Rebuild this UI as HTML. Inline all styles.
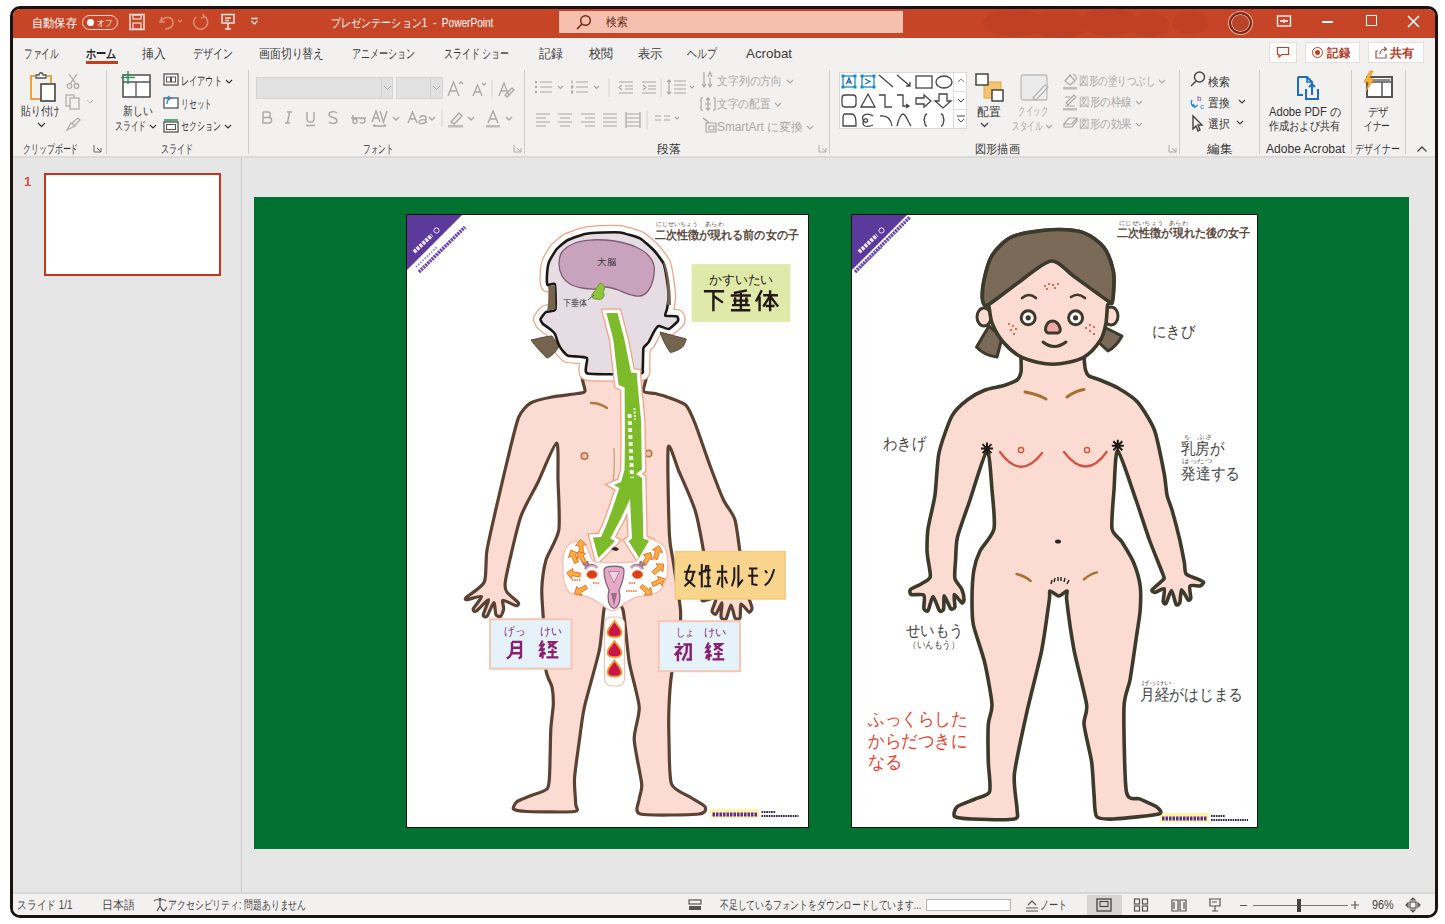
<!DOCTYPE html>
<html><head><meta charset="utf-8">
<style>
*{margin:0;padding:0;box-sizing:border-box}
html,body{width:1445px;height:924px;overflow:hidden;background:#fff;font-family:"Liberation Sans",sans-serif}
.a{position:absolute}
.t{position:absolute;white-space:nowrap;line-height:1;transform-origin:0 50%}
.sep{position:absolute;width:1px;background:#cfcccb}
svg{overflow:visible}
</style></head><body>
<div class="a" style="left:10px;top:6px;width:1428px;height:912px;border:3px solid #1b1312;border-radius:10px;background:#f3f1ef"></div>
<!-- title bar -->
<div class="a" style="left:13px;top:9px;width:1422px;height:29px;background:#c64527;border-radius:7px 7px 0 0"></div>
<!-- ribbon bg -->
<div class="a" style="left:13px;top:38px;width:1422px;height:119px;background:#f3f1ef"></div>
<div class="a" style="left:13px;top:156px;width:1422px;height:2px;background:#dcdad9"></div>
<!-- main bg -->
<div class="a" style="left:13px;top:158px;width:1422px;height:735px;background:#e6e6e6"></div>
<div class="a" style="left:241px;top:158px;width:1px;height:735px;background:#cbcbcb"></div>
<div class="a" style="left:13px;top:892px;width:1422px;height:2px;background:#d6d6d6"></div>
<!-- status bg -->
<div class="a" style="left:13px;top:894px;width:1422px;height:21px;background:#f3f1ef;border-radius:0 0 7px 7px"></div>

<!-- title bar content -->
<div class="a" style="left:82px;top:15px;width:36px;height:15px;border:1.5px solid #f4d7cf;border-radius:8px"></div>
<div class="a" style="left:87px;top:19px;width:7px;height:7px;background:#fff;border-radius:50%"></div>
<svg class="a" style="left:128px;top:13px" width="20" height="18" viewBox="0 0 20 18"><rect x="2" y="1.5" width="14" height="15" fill="none" stroke="#f6e2dc" stroke-width="1.5"/><rect x="5" y="2" width="8" height="4" fill="none" stroke="#f6e2dc" stroke-width="1.2"/><rect x="5" y="10" width="8" height="6" fill="none" stroke="#f6e2dc" stroke-width="1.2"/></svg>
<svg class="a" style="left:157px;top:12px" width="28" height="20" viewBox="0 0 28 20"><path d="M5 5 L3 10 L8 10 M4 9 C8 4 16 4 16 11 C16 15 12 17 8 17" fill="none" stroke="#e08a74" stroke-width="1.6"/><path d="M21 8 l2 2 l2 -2" fill="none" stroke="#e08a74" stroke-width="1.2"/></svg>
<svg class="a" style="left:190px;top:12px" width="22" height="20" viewBox="0 0 22 20"><path d="M14 4 A7 7 0 1 1 6 5 M13 2 L14 5 L11 6" fill="none" stroke="#e08a74" stroke-width="1.6"/></svg>
<svg class="a" style="left:219px;top:12px" width="18" height="20" viewBox="0 0 18 20"><path d="M2 2.5 H16 M3 3 V11 H15 V3 M9 11 V17 M6 17 H12 M6 6 H12 M6 8.5 H10" fill="none" stroke="#f6e2dc" stroke-width="1.5"/></svg>
<svg class="a" style="left:250px;top:17px" width="9" height="9" viewBox="0 0 9 9"><path d="M1 1.5 H8 M1.5 4 L4.5 7 L7.5 4" fill="none" stroke="#f6e2dc" stroke-width="1.3"/></svg>
<div class="a" style="left:559px;top:11px;width:344px;height:22px;background:#f5c0ad"></div>
<svg class="a" style="left:575px;top:14px" width="18" height="17" viewBox="0 0 18 17"><circle cx="10.5" cy="6.5" r="4.8" fill="none" stroke="#7a2a18" stroke-width="1.5"/><path d="M7 10 L2 15" stroke="#7a2a18" stroke-width="1.7"/></svg>
<svg class="a" style="left:960px;top:9px" width="300" height="29" viewBox="0 0 300 29">
 <g fill="#a8321c" opacity="0.22">
 <ellipse cx="55" cy="14" rx="32" ry="13"/><ellipse cx="100" cy="16" rx="30" ry="13"/><ellipse cx="150" cy="13" rx="28" ry="14"/><ellipse cx="190" cy="16" rx="20" ry="12"/><ellipse cx="230" cy="14" rx="18" ry="11"/>
 </g>
</svg>
<div class="a" style="left:1229px;top:12px;width:23px;height:22px;border-radius:50%;border:2px solid #7a2a18;box-shadow:0 0 0 1px #e8b0a0, inset 0 0 0 1px #e8b0a0;background:#b8442a"></div>
<svg class="a" style="left:1276px;top:14px" width="16" height="14" viewBox="0 0 16 14"><rect x="1.5" y="2" width="13" height="10" fill="none" stroke="#fff" stroke-width="1.3"/><path d="M4 7 H12 M8 5 V9" stroke="#fff" stroke-width="1.3"/></svg>
<div class="a" style="left:1322px;top:21px;width:11px;height:1.5px;background:#fff"></div>
<div class="a" style="left:1366px;top:15px;width:11px;height:11px;border:1.5px solid #fff"></div>
<svg class="a" style="left:1406px;top:14px" width="15" height="15" viewBox="0 0 15 15"><path d="M2 2 L13 13 M13 2 L2 13" stroke="#fff" stroke-width="1.5"/></svg>

<!-- tab underline -->
<div class="a" style="left:86px;top:61px;width:32px;height:3px;background:#c43e1c"></div>
<!-- top right buttons -->
<div class="a" style="left:1269px;top:42px;width:28px;height:21px;background:#fff;border:1px solid #e3e0de"></div>
<svg class="a" style="left:1276px;top:46px" width="14" height="13" viewBox="0 0 14 13"><path d="M1.5 1.5 H12.5 V8.5 H6 L3 11 V8.5 H1.5 Z" fill="none" stroke="#c43e1c" stroke-width="1.2"/></svg>
<div class="a" style="left:1305px;top:42px;width:55px;height:21px;background:#fff;border:1px solid #e3e0de"></div>
<div class="a" style="left:1312px;top:47px;width:11px;height:11px;border:1.3px solid #c43e1c;border-radius:50%"></div>
<div class="a" style="left:1315px;top:50px;width:5px;height:5px;background:#c43e1c;border-radius:50%"></div>
<div class="a" style="left:1368px;top:42px;width:56px;height:21px;background:#fff;border:1px solid #e3e0de"></div>
<svg class="a" style="left:1374px;top:46px" width="14" height="13" viewBox="0 0 14 13"><path d="M4 5 H2 V12 H12 V8 M6 8 C6 4 9 3 12 3 M10 1 L12.5 3 L10 5" fill="none" stroke="#9a5a4a" stroke-width="1.2"/></svg>

<!-- ribbon separators -->
<div class="sep" style="left:106px;top:70px;height:84px"></div>
<div class="sep" style="left:248px;top:70px;height:84px"></div>
<div class="sep" style="left:524px;top:70px;height:84px"></div>
<div class="sep" style="left:829px;top:70px;height:84px"></div>
<div class="sep" style="left:1179px;top:70px;height:84px"></div>
<div class="sep" style="left:1259px;top:70px;height:84px"></div>
<div class="sep" style="left:1351px;top:70px;height:84px"></div>
<div class="sep" style="left:1405px;top:70px;height:84px"></div>
<svg class="a" style="left:1416px;top:145px" width="12" height="8" viewBox="0 0 12 8"><path d="M1.5 6.5 L6 2 L10.5 6.5" fill="none" stroke="#444" stroke-width="1.3"/></svg>
<!-- launchers -->
<svg class="a" style="left:93px;top:144px" width="9" height="9" viewBox="0 0 9 9"><path d="M1 1 V8 H8 M8 4 V8 M4 4 L8 8" fill="none" stroke="#666" stroke-width="1"/></svg>
<svg class="a" style="left:513px;top:144px" width="9" height="9" viewBox="0 0 9 9"><path d="M1 1 V8 H8 M8 4 V8 M4 4 L8 8" fill="none" stroke="#aaa" stroke-width="1"/></svg>
<svg class="a" style="left:818px;top:144px" width="9" height="9" viewBox="0 0 9 9"><path d="M1 1 V8 H8 M8 4 V8 M4 4 L8 8" fill="none" stroke="#aaa" stroke-width="1"/></svg>
<svg class="a" style="left:1168px;top:144px" width="9" height="9" viewBox="0 0 9 9"><path d="M1 1 V8 H8 M8 4 V8 M4 4 L8 8" fill="none" stroke="#aaa" stroke-width="1"/></svg>

<!-- clipboard group -->
<svg class="a" style="left:27px;top:71px" width="32" height="32" viewBox="0 0 32 32"><path d="M8 5 H4 V28 H14" fill="none" stroke="#e8a33a" stroke-width="2"/><path d="M20 5 H24 V12" fill="none" stroke="#e8a33a" stroke-width="2"/><path d="M9 7 V4 H12 C12 1 16 1 16 4 H19 V7 Z" fill="#fff" stroke="#555" stroke-width="1.3"/><rect x="14" y="13" width="14" height="17" fill="#fff" stroke="#444" stroke-width="1.6"/></svg>
<svg class="a" style="left:37px;top:122px" width="9" height="6" viewBox="0 0 9 6"><path d="M1 1 L4.5 4.5 L8 1" fill="none" stroke="#444" stroke-width="1.3"/></svg>
<svg class="a" style="left:66px;top:73px" width="14" height="16" viewBox="0 0 14 16"><path d="M3 1 L10 11 M11 1 L4 11" stroke="#aaa" stroke-width="1.2"/><circle cx="3.5" cy="13" r="2.3" fill="none" stroke="#aaa" stroke-width="1.2"/><circle cx="10.5" cy="13" r="2.3" fill="none" stroke="#aaa" stroke-width="1.2"/></svg>
<svg class="a" style="left:65px;top:94px" width="30" height="16" viewBox="0 0 30 16"><rect x="1" y="1" width="8" height="11" fill="none" stroke="#aaa" stroke-width="1.2"/><rect x="5" y="4" width="9" height="11" fill="#f3f1ef" stroke="#aaa" stroke-width="1.2"/><path d="M22 6 L25 9 L28 6" fill="none" stroke="#bbb" stroke-width="1"/></svg>
<svg class="a" style="left:65px;top:116px" width="16" height="16" viewBox="0 0 16 16"><path d="M2 14 L6 7 L10 10 Z M7 7 L13 2 L15 4 L10 9" fill="none" stroke="#aaa" stroke-width="1.2"/></svg>

<!-- slides group -->
<svg class="a" style="left:120px;top:70px" width="32" height="30" viewBox="0 0 32 30"><rect x="3" y="5" width="27" height="22" fill="#fff" stroke="#555" stroke-width="1.6"/><path d="M3 12 H30 M16 12 V27" stroke="#555" stroke-width="1.3"/><path d="M8 1 V14 M1 7.5 H15" stroke="#2e9a5a" stroke-width="1.6"/></svg>
<svg class="a" style="left:163px;top:73px" width="16" height="13" viewBox="0 0 16 13"><rect x="1" y="1" width="14" height="11" fill="#fff" stroke="#555" stroke-width="1.3"/><rect x="3.5" y="4" width="4" height="5" fill="none" stroke="#555" stroke-width="1"/><rect x="8.5" y="4" width="4" height="5" fill="none" stroke="#555" stroke-width="1"/></svg>
<svg class="a" style="left:163px;top:95px" width="16" height="14" viewBox="0 0 16 14"><rect x="1" y="3" width="14" height="10" fill="#fff" stroke="#555" stroke-width="1.3"/><path d="M4 9 C4 5 6 3 9 3 M4 3 L6.5 1 M4 3 L7 5" fill="none" stroke="#2b8ad6" stroke-width="1.3"/></svg>
<svg class="a" style="left:163px;top:118px" width="16" height="15" viewBox="0 0 16 15"><rect x="1" y="1" width="14" height="2.5" fill="#5fae7a"/><rect x="1" y="4" width="14" height="10" fill="#fff" stroke="#555" stroke-width="1.3"/><rect x="3.5" y="6.5" width="9" height="5" fill="none" stroke="#555" stroke-width="1"/></svg>

<!-- font group -->
<div class="a" style="left:256px;top:77px;width:137px;height:22px;background:#e1e1e1;border:1px solid #d3d3d3"></div>
<div class="a" style="left:381px;top:78px;width:1px;height:20px;background:#d0d0d0"></div>
<svg class="a" style="left:383px;top:85px" width="9" height="6" viewBox="0 0 9 6"><path d="M1 1 L4.5 4.5 L8 1" fill="none" stroke="#aaa" stroke-width="1"/></svg>
<div class="a" style="left:396px;top:77px;width:47px;height:22px;background:#e1e1e1;border:1px solid #d3d3d3"></div>
<div class="a" style="left:430px;top:78px;width:1px;height:20px;background:#d0d0d0"></div>
<svg class="a" style="left:432px;top:85px" width="9" height="6" viewBox="0 0 9 6"><path d="M1 1 L4.5 4.5 L8 1" fill="none" stroke="#aaa" stroke-width="1"/></svg>
<svg class="a" style="left:446px;top:78px" width="70" height="22" viewBox="0 0 70 22">
 <g fill="none" stroke="#a8a8a8" stroke-width="1.3">
 <path d="M2 18 L7.5 4 L13 18 M4.5 13 H10.5 M13 6 L15 4 L17 6"/>
 <path d="M27 18 L31.5 7 L36 18 M29 14 H34 M36 5 L38 7 L40 5"/>
 <path d="M53 18 L58 5 L63 18 M55 13 H61 M59 17 L66 10 L68 12 L61 19 Z"/>
 </g>
 <path d="M46 2 V20" stroke="#d6d4d2" stroke-width="1"/>
</svg>
<svg class="a" style="left:256px;top:107px" width="260" height="22" viewBox="0 0 260 22">
 <g fill="none" stroke="#a8a8a8" stroke-width="1.4">
 <path d="M7 5 H12 C15 5 15 10.5 12 10.5 H7 M7 10.5 H13 C16.5 10.5 16.5 16 13 16 H7 V5"/>
 <path d="M31 5 H36 M29 16 H34 M33.5 5 L31.5 16"/>
 <path d="M51 5 V12 C51 16 58 16 58 12 V5 M50 18.5 H59"/>
 <path d="M81 6 C79 4 73 4 73 7.5 C73 11 81 10 81 13.5 C81 17 75 17 73 15"/>
 <path d="M95 11 H110 M97 8 V15 C97 17 101 17 101 14 C101 11 97 11 97 14 M104 12 C107 10 109 12 109 14 C109 16 105 17 104 15"/>
 <path d="M116 15 L120 4 L124 15 M118 11 H122 M124 4 L127.5 15 L131 4 M117 19 H130 M117 19 l2 -1.5 M130 19 l-2 -1.5"/>
 <path d="M137 10 l3 3 l3 -3"/>
 <path d="M152 16 L156.5 5 L161 16 M154 12 H159 M170 16 V11 C170 8 164 8 164 11 M170 13 C167 12 163 13 163 15 C163 17.5 170 17 170 14"/>
 <path d="M173 10 l3 3 l3 -3"/>
 <path d="M195 15 L203 6 L206 9 L198 17 Z"/>
 <path d="M212 10 l3 3 l3 -3"/>
 <path d="M232 16 L237 4 L242 16 M234 12 H240"/>
 <path d="M250 10 l3 3 l3 -3"/>
 </g>
 <rect x="192" y="18" width="15" height="2.5" fill="#bdbdbd"/>
 <rect x="230" y="18" width="14" height="2.5" fill="#bdbdbd"/>
 <path d="M186 2 V20" stroke="#d6d4d2" stroke-width="1"/>
</svg>

<!-- paragraph group -->
<svg class="a" style="left:530px;top:74px" width="170" height="56" viewBox="0 0 170 56">
 <g fill="none" stroke="#a8a8a8" stroke-width="1.2">
 <path d="M10 8 H22 M10 13 H22 M10 18 H22 M28 12 l2.5 2.5 l2.5 -2.5"/>
 <path d="M46 8 H58 M46 13 H58 M46 18 H58 M64 12 l2.5 2.5 l2.5 -2.5"/>
 <path d="M89 8 H103 M95 12 H103 M95 15 H103 M89 19 H103 M92 11 L89 13.5 L92 16"/>
 <path d="M112 8 H126 M118 12 H126 M118 15 H126 M112 19 H126 M113 11 L116 13.5 L113 16"/>
 <path d="M144 7 H156 M144 11 H156 M144 15 H156 M144 19 H156 M139 6 V20 M137 8 l2 -2 l2 2 M137 18 l2 2 l2 -2 M160 12 l2 2 l2 -2"/>
 <path d="M6 40 H20 M6 44 H16 M6 48 H20 M6 52 H16"/>
 <path d="M28 40 H42 M30 44 H40 M28 48 H42 M30 52 H40"/>
 <path d="M51 40 H65 M55 44 H65 M51 48 H65 M55 52 H65"/>
 <path d="M73 40 H87 M73 44 H87 M73 48 H87 M73 52 H87"/>
 <path d="M96 40 H110 M96 44 H110 M96 48 H110 M96 52 H110 M96 38 V54 M110 38 V54"/>
 <path d="M125 42 H131 M125 46 H131 M134 42 H140 M134 46 H140 M145 43 l2 2 l2 -2"/>
 </g>
 <g fill="#a8a8a8"><circle cx="6" cy="8" r="1.2"/><circle cx="6" cy="13" r="1.2"/><circle cx="6" cy="18" r="1.2"/><rect x="41.5" y="6.5" width="1.2" height="3"/><rect x="41" y="11.5" width="2.2" height="3"/><rect x="41" y="16.5" width="2.2" height="3"/></g>
 <path d="M79 4 V23 M131 4 V23 M117 36 V56" stroke="#d6d4d2" stroke-width="1"/>
</svg>
<svg class="a" style="left:700px;top:70px" width="20" height="66" viewBox="0 0 20 66">
 <g fill="none" stroke="#a8a8a8" stroke-width="1.2">
 <path d="M4 2 V17 M2 14 l2 3 l2 -3 M10 8 V17 M8 14 l2 3 l2 -3 M8 7 L10 2 L12 7"/>
 <path d="M3 28 H1 V40 H3 M13 28 H15 V40 H13 M8 27 V41 M6 30 l2 -2 l2 2 M6 38 l2 2 l2 -2 M5 34 H11"/>
 <path d="M3 48 L8 52 M5 49 L9 53 M6 53 H16 V62 H6 Z M9 56 H14 V60 H9 Z"/>
 </g>
</svg>

<!-- drawing group -->
<div class="a" style="left:839px;top:72px;width:128px;height:57px;background:#fff;border:1px solid #dcdad8"></div>
<div class="a" style="left:953px;top:72px;width:1px;height:57px;background:#dcdad8"></div>
<div class="a" style="left:954px;top:91px;width:13px;height:19px;border-top:1px solid #dcdad8;border-bottom:1px solid #dcdad8"></div>
<svg class="a" style="left:839px;top:72px" width="130" height="58" viewBox="0 0 130 58">
 <g fill="none" stroke="#444" stroke-width="1.3">
 <rect x="4" y="4" width="12" height="11" stroke="#1a8ac6"/><path d="M7.5 12 L10 6 L12.5 12 M8.5 10 H11.5" stroke="#1a6ab6"/>
 <rect x="23" y="4" width="12" height="11" stroke="#1a8ac6"/><path d="M26 7 L31 9.5 L26 12" stroke="#1a6ab6"/>
 <path d="M40 3 L54 15"/>
 <path d="M58 3 L71 14 M67 14 H71 V10"/>
 <rect x="77" y="4" width="16" height="12"/>
 <ellipse cx="105" cy="10" rx="8" ry="6"/>
 <rect x="3" y="23" width="14" height="12" rx="3"/>
 <path d="M22 35 L29 22 L36 35 Z"/>
 <path d="M40 23 H46 V35 H53"/>
 <path d="M58 23 H64 V34 H70 M67 32 l3 2 l-3 2"/>
 <path d="M77 26 H85 V23 L92 29 L85 35 V32 H77 Z"/>
 <path d="M100 22 H108 V29 H112 L104 36 L96 29 H100 Z"/>
 <path d="M5 42 H12 C17 42 17 48 17 54 H4 V46 C4 44 5 42 5 42"/>
 <path d="M34 44 C28 40 22 43 24 48 C26 52 30 50 28 47 C25 45 22 52 26 54 C29 55 32 54 34 53"/>
 <path d="M41 44 C48 43 52 47 53 54"/>
 <path d="M58 54 C60 46 62 42 64 42 C67 42 69 50 72 54"/>
 <path d="M88 42 C85 42 86 47 85 48 C86 49 85 54 88 54"/>
 <path d="M102 42 C105 42 104 47 105 48 C104 49 105 54 102 54"/>
 </g>
 <g fill="none" stroke="#888" stroke-width="1"><path d="M119 10 l3 -3 l3 3"/><path d="M119 27 l3 3 l3 -3" stroke="#444"/><path d="M118 44 H126 M119 47 l3 3 l3 -3" stroke="#444"/></g>
 <g fill="#1a8ac6"><rect x="2.5" y="2.5" width="3" height="3"/><rect x="14.5" y="2.5" width="3" height="3"/><rect x="2.5" y="13.5" width="3" height="3"/><rect x="14.5" y="13.5" width="3" height="3"/><rect x="21.5" y="2.5" width="3" height="3"/><rect x="33.5" y="2.5" width="3" height="3"/><rect x="21.5" y="13.5" width="3" height="3"/><rect x="33.5" y="13.5" width="3" height="3"/></g>
</svg>
<svg class="a" style="left:974px;top:72px" width="32" height="30" viewBox="0 0 32 30">
 <rect x="10" y="10" width="17" height="16" fill="#f2c572" stroke="#e8a33a" stroke-width="1"/>
 <rect x="2" y="2" width="12" height="11" fill="#fff" stroke="#444" stroke-width="1.5"/>
 <rect x="18" y="18" width="11" height="11" fill="#fff" stroke="#444" stroke-width="1.5"/>
</svg>
<svg class="a" style="left:980px;top:122px" width="9" height="6" viewBox="0 0 9 6"><path d="M1 1 L4.5 4.5 L8 1" fill="none" stroke="#444" stroke-width="1.3"/></svg>
<svg class="a" style="left:1019px;top:73px" width="32" height="30" viewBox="0 0 32 30">
 <rect x="2" y="2" width="26" height="25" rx="2" fill="#ebebeb" stroke="#bdbdbd" stroke-width="1.3"/>
 <path d="M14 25 L26 12 L29 14 L17 27 Z" fill="#f3f3f3" stroke="#b0b0b0" stroke-width="1.2"/>
</svg>
<svg class="a" style="left:1061px;top:72px" width="18" height="60" viewBox="0 0 18 60">
 <g fill="none" stroke="#a8a8a8" stroke-width="1.2">
 <path d="M4 9 L9 3 L14 9 L9 13 Z M12 2 C15 3 16 6 15 8"/>
 <path d="M4 25 H9 M4 34 H14 M5 31 L13 23 L15 25 L7 33 Z"/>
 <path d="M3 52 L8 46 H16 L11 52 Z M3 52 V55 H11 L16 49 V46"/>
 </g>
 <rect x="2" y="15" width="14" height="2.5" fill="#bdbdbd"/><rect x="2" y="36" width="14" height="2.5" fill="#bdbdbd"/>
</svg>

<!-- editing group -->
<svg class="a" style="left:1189px;top:70px" width="18" height="62" viewBox="0 0 18 62">
 <g fill="none" stroke="#444" stroke-width="1.4">
 <circle cx="10.5" cy="7" r="5"/><path d="M7 11 L2 16"/>
 <path d="M3 30 C1 33 3 37 6 37 M4 34 L6 37 L9 35" stroke="#2b8ad6"/>
 <path d="M4 46 V59 L7 56 L9 61 L11 60 L9 55 L13 55 Z" stroke="#444"/>
 </g>
 <text x="8" y="31" font-size="8" fill="#8a3aa8" font-family="Liberation Sans">b</text>
 <text x="11" y="39" font-size="8" fill="#2b8ad6" font-family="Liberation Sans">c</text>
</svg>
<svg class="a" style="left:1237px;top:99px" width="9" height="30" viewBox="0 0 9 30"><path d="M2 1 l3 3 l3 -3 M0 22 l3 3 l3 -3" fill="none" stroke="#444" stroke-width="1.2"/></svg>
<svg class="a" style="left:1295px;top:75px" width="26" height="26" viewBox="0 0 26 26">
 <path d="M3 2 H12 L17 7 V12 M3 2 V20 H8" fill="none" stroke="#1a6fc4" stroke-width="2"/>
 <path d="M12 2 V7 H17" fill="none" stroke="#1a6fc4" stroke-width="1.6"/>
 <path d="M11 14 V24 H23 V14 M17 20 V9 M14 12 L17 9 L20 12" fill="none" stroke="#1a6fc4" stroke-width="2"/>
</svg>
<svg class="a" style="left:1362px;top:70px" width="32" height="30" viewBox="0 0 32 30">
 <rect x="5" y="7" width="25" height="20" fill="#fff" stroke="#555" stroke-width="2"/>
 <path d="M5 12 H30 M20 12 V27" stroke="#555" stroke-width="1.5"/>
 <rect x="8" y="9" width="20" height="2" fill="#8d8d8d"/>
 <path d="M8 1 L2 12 H7 L4 21 L12 9 H7 L11 1 Z" fill="#f5b82e" stroke="#e8892a" stroke-width="0.8"/>
</svg>

<!-- status bar icons -->
<svg class="a" style="left:152px;top:897px" width="16" height="16" viewBox="0 0 16 16"><path d="M2 4 C4 2 7 2 8 4 C9 2 12 2 14 4 M8 4 V9 M5 14 L8 9 L11 14 M10 12 L12 14 L15 10" fill="none" stroke="#555" stroke-width="1.2"/><circle cx="8" cy="2" r="1.3" fill="#555"/></svg>
<svg class="a" style="left:688px;top:899px" width="14" height="12" viewBox="0 0 14 12"><rect x="1" y="1" width="12" height="4" fill="none" stroke="#555" stroke-width="1.2"/><rect x="1" y="7" width="12" height="4" fill="#555"/></svg>
<div class="a" style="left:926px;top:899px;width:85px;height:12px;background:#fff;border:1px solid #b5b5b5"></div>
<svg class="a" style="left:1024px;top:897px" width="16" height="16" viewBox="0 0 16 16"><path d="M2 11 H14 M2 14 H14 M4 8 L8 4 L12 8" fill="none" stroke="#555" stroke-width="1.2"/></svg>
<div class="a" style="left:1087px;top:895px;width:35px;height:20px;background:#d7d5d3"></div>
<svg class="a" style="left:1096px;top:898px" width="16" height="14" viewBox="0 0 16 14"><rect x="1" y="1" width="14" height="12" fill="none" stroke="#444" stroke-width="1.3"/><rect x="4" y="3.5" width="8" height="5" fill="none" stroke="#444" stroke-width="1.1"/></svg>
<svg class="a" style="left:1133px;top:898px" width="16" height="14" viewBox="0 0 16 14"><g fill="none" stroke="#555" stroke-width="1.2"><rect x="1.5" y="1" width="5" height="5"/><rect x="9.5" y="1" width="5" height="5"/><rect x="1.5" y="8" width="5" height="5"/><rect x="9.5" y="8" width="5" height="5"/></g></svg>
<svg class="a" style="left:1171px;top:898px" width="16" height="14" viewBox="0 0 16 14"><g fill="none" stroke="#555" stroke-width="1.2"><path d="M1 2 H7 V13 H1 Z M9 2 H15 V13 H9 Z M3 4 V11 M13 4 V11"/></g></svg>
<svg class="a" style="left:1207px;top:897px" width="16" height="16" viewBox="0 0 16 16"><path d="M2 2 H14 M3 2 V9 H13 V2 M8 9 V14 M5 14 H11 M5 5 H10" fill="none" stroke="#555" stroke-width="1.2"/></svg>
<div class="a" style="left:1240px;top:905px;width:7px;height:1.3px;background:#555"></div>
<div class="a" style="left:1253px;top:905px;width:95px;height:1px;background:#777"></div>
<div class="a" style="left:1297px;top:899px;width:4px;height:13px;background:#444"></div>
<svg class="a" style="left:1350px;top:900px" width="10" height="10" viewBox="0 0 10 10"><path d="M5 1 V9 M1 5 H9" stroke="#555" stroke-width="1.2"/></svg>
<svg class="a" style="left:1405px;top:897px" width="16" height="16" viewBox="0 0 16 16"><g fill="none" stroke="#555" stroke-width="1.2"><rect x="5" y="5" width="6" height="6"/><path d="M8 1 l-2 2 h4 z M8 15 l-2 -2 h4 z M1 8 l2 -2 v4 z M15 8 l-2 -2 v4 z"/></g></svg>

<!-- thumbnail -->
<div class="t" style="left:24px;top:175px;font-size:13px;color:#d4514a;font-weight:bold">1</div>
<div class="a" style="left:43.5px;top:173px;width:177.5px;height:103px;border:2.6px solid #c5341f;background:#fff"></div>
<div class="a" style="left:254px;top:197px;width:1155px;height:652px;background:#007131"></div>
<div class="a" style="left:406px;top:214px;width:403px;height:614px;background:#fff;border:1.5px solid #111"></div>
<div class="a" style="left:851px;top:214px;width:407px;height:614px;background:#fff;border:1.5px solid #111"></div>
<svg class="a" style="left:0;top:0" width="1445" height="924" viewBox="0 0 1445 924"><path d="M585.0 372.0 C578.2 374.2 585.9 388.5 585.0 391.0 C584.1 393.5 581.5 392.8 577.6 393.5 C573.8 394.2 557.5 395.9 552.0 397.0 C546.5 398.1 534.5 400.7 530.6 403.0 C526.7 405.3 521.3 411.3 518.8 417.0 C516.3 422.7 511.9 442.1 509.4 452.0 C506.9 461.9 500.2 490.4 497.6 501.8 C495.0 513.2 488.6 540.6 487.0 550.0 C485.4 559.4 486.7 576.5 484.3 582.0 C481.9 587.5 468.4 595.2 466.4 597.3 C464.4 599.4 465.4 599.7 467.2 599.6 C469.0 599.5 480.9 595.4 481.6 596.5 C482.3 597.6 473.9 607.0 473.3 608.7 C472.7 610.4 474.5 612.1 476.3 611.0 C478.1 609.9 487.7 599.2 488.5 599.6 C489.3 600.0 483.4 612.9 483.2 614.8 C483.0 616.7 485.8 617.7 487.0 616.3 C488.2 614.9 492.8 602.8 493.8 602.6 C494.9 602.4 495.2 613.2 496.0 614.8 C496.8 616.4 499.8 617.0 500.7 616.3 C501.6 615.6 503.4 610.6 503.7 608.7 C504.0 606.8 501.6 600.6 503.0 600.3 C504.4 599.9 514.2 605.4 516.0 605.7 C517.8 606.0 519.3 604.2 518.2 602.6 C517.1 601.0 508.3 594.3 506.8 592.0 C505.3 589.7 504.8 586.5 505.2 582.8 C505.6 579.1 508.0 567.8 509.8 560.0 C511.6 552.2 517.8 525.0 521.0 516.0 C524.2 507.0 533.5 491.5 537.6 483.0 C541.7 474.5 554.1 443.4 556.5 443.0 C558.9 442.6 557.7 469.9 558.0 480.0 C558.3 490.1 560.2 520.7 558.8 530.0 C557.4 539.3 548.0 553.1 546.0 560.0 C544.0 566.9 542.1 582.2 541.8 589.0 C541.5 595.8 542.8 609.2 543.3 618.6 C543.8 628.0 544.9 661.7 545.9 669.7 C546.9 677.7 551.1 682.9 552.0 687.0 C552.9 691.1 553.4 699.6 553.3 704.5 C553.2 709.4 551.2 721.3 550.8 729.4 C550.4 737.5 550.0 767.2 549.6 774.2 C549.2 781.2 549.3 786.5 547.0 789.0 C544.7 791.5 533.5 794.5 530.0 796.0 C526.5 797.5 519.1 800.1 517.2 801.6 C515.3 803.1 512.3 807.8 513.5 809.0 C514.7 810.2 520.1 811.2 527.2 811.5 C534.3 811.8 568.8 812.4 574.5 811.5 C580.2 810.6 575.7 807.8 575.7 804.0 C575.7 800.2 574.1 786.5 574.5 779.0 C574.9 771.5 578.3 747.8 579.5 739.4 C580.7 731.0 582.1 717.5 584.4 707.0 C586.7 696.5 597.1 661.4 599.4 649.8 C601.7 638.2 602.8 613.3 604.4 607.5 C606.0 601.7 610.8 599.7 613.0 600.0 C615.2 600.3 621.1 602.8 623.0 610.0 C624.9 617.2 627.3 650.7 629.2 662.0 C631.1 673.3 638.6 698.0 639.2 707.0 C639.8 716.0 633.9 730.4 634.2 739.4 C634.5 748.4 641.1 777.0 641.7 784.0 C642.3 791.0 639.4 795.5 639.2 799.0 C639.0 802.5 633.4 812.2 640.4 814.0 C647.4 815.8 691.5 814.9 699.0 814.0 C706.5 813.1 706.0 808.6 705.0 806.6 C704.0 804.6 693.9 799.6 690.0 797.0 C686.1 794.4 674.0 790.6 671.5 784.0 C669.0 777.4 669.3 749.0 669.0 740.0 C668.7 731.0 668.7 714.6 669.0 707.0 C669.3 699.4 670.3 682.8 671.5 674.7 C672.7 666.6 678.0 644.8 679.0 637.3 C680.0 629.8 680.9 616.7 680.5 610.0 C680.1 603.3 676.9 585.8 676.0 580.0 C675.1 574.2 673.8 565.3 673.0 560.0 C672.2 554.7 670.0 547.8 669.4 534.7 C668.8 521.6 667.1 455.0 668.2 447.6 C669.3 440.2 675.6 463.6 678.8 471.0 C682.0 478.4 692.2 500.6 695.3 511.0 C698.4 521.4 703.5 550.8 705.0 560.0 C706.5 569.2 708.4 585.7 708.0 590.0 C707.6 594.3 702.6 595.7 702.0 597.0 C701.4 598.3 701.4 600.9 703.0 601.0 C704.6 601.1 715.0 596.8 716.0 598.0 C717.0 599.2 712.0 609.1 712.0 611.0 C712.0 612.9 714.8 614.9 716.0 614.0 C717.2 613.1 721.4 602.6 722.0 603.0 C722.6 603.4 720.5 615.1 721.0 617.0 C721.5 618.9 724.8 620.4 726.0 619.0 C727.2 617.6 730.0 605.1 731.0 605.0 C732.0 604.9 734.0 616.5 735.0 618.0 C736.0 619.5 739.3 619.6 740.0 618.0 C740.7 616.4 740.0 604.7 741.0 604.0 C742.0 603.3 747.7 611.5 749.0 612.0 C750.3 612.5 752.1 609.9 752.0 608.0 C751.9 606.1 748.9 598.7 748.0 596.0 C747.1 593.3 745.5 589.2 744.7 585.0 C743.9 580.8 742.1 567.6 741.0 560.0 C739.9 552.4 737.0 527.0 735.0 520.0 C733.0 513.0 726.5 506.5 723.5 500.0 C720.5 493.5 712.7 472.9 709.4 464.0 C706.1 455.1 698.0 430.8 695.3 424.0 C692.6 417.2 689.0 408.3 686.0 405.3 C683.0 402.3 673.6 399.4 670.0 398.0 C666.4 396.6 658.4 394.3 655.3 393.5 C652.2 392.7 644.9 393.5 643.5 391.0 C642.1 388.5 650.3 374.2 643.5 372.0 C636.7 369.8 591.8 369.8 585.0 372.0 Z" fill="#fcdbd2" stroke="#5a4233" stroke-width="3.2" stroke-linejoin="round"/>
<path d="M591 403 Q600 403 607 408" fill="none" stroke="#b07a3a" stroke-width="2.4" stroke-linecap="round"/>
<circle cx="584.5" cy="456" r="3.3" fill="#f2b8b0" stroke="#b07a3a" stroke-width="1.6"/>
<circle cx="648.5" cy="453.5" r="3.3" fill="#f2b8b0" stroke="#b07a3a" stroke-width="1.6"/>
<path d="M614 448 Q615 465 613 485" fill="none" stroke="#c9a27a" stroke-width="1.3"/>
<path d="M602.8 232.5 C599.9 232.6 587.9 233.4 585.0 234.0 C582.1 234.6 570.4 238.8 568.0 240.0 C565.6 241.2 558.4 247.2 556.8 249.0 C555.2 250.8 549.8 259.8 549.0 262.0 C548.2 264.2 547.1 273.1 547.0 275.0 C546.9 276.9 547.0 284.1 547.6 284.9 C548.2 285.7 554.1 282.3 554.8 284.3 C555.4 286.3 556.1 307.0 555.4 309.3 C554.7 311.6 547.2 311.2 546.0 312.0 C544.8 312.8 540.8 318.0 540.5 319.0 C540.2 320.0 542.2 323.2 543.0 324.0 C543.8 324.8 549.0 328.2 550.0 329.0 C551.0 329.8 554.4 333.1 555.0 334.0 C555.6 334.9 556.7 339.1 557.0 340.0 C557.3 340.9 558.6 344.2 559.0 345.0 C559.4 345.8 561.2 349.1 562.0 350.0 C562.8 350.9 565.9 355.0 568.0 355.7 C570.1 356.4 585.3 356.5 586.9 358.0 C588.5 359.5 583.1 372.3 587.5 373.6 C591.9 374.9 635.4 374.0 640.0 373.6 C644.6 373.2 642.4 371.1 642.7 369.0 C643.0 366.9 643.0 350.2 643.5 348.0 C644.0 345.8 647.7 343.7 648.5 342.4 C649.3 341.1 652.8 333.8 653.6 332.4 C654.4 331.0 657.3 326.3 658.6 326.0 C659.9 325.7 667.1 329.4 668.7 329.0 C670.3 328.6 677.2 322.1 677.9 321.0 C678.6 319.9 678.0 316.8 677.0 316.4 C676.0 315.9 666.1 316.2 665.3 315.6 C664.5 315.0 666.7 310.7 667.0 309.0 C667.3 307.3 668.7 297.9 668.7 295.5 C668.7 293.1 667.4 283.1 667.0 280.4 C666.6 277.7 664.7 266.1 663.6 263.6 C662.5 261.1 655.6 252.1 653.6 250.0 C651.6 247.9 642.8 239.9 640.0 238.4 C637.2 236.9 623.1 233.0 620.0 232.5 C616.9 232.0 605.7 232.4 602.8 232.5 Z" fill="#fff" stroke="#f0a282" stroke-width="15" stroke-linejoin="round"/>
<path d="M602.8 232.5 C599.9 232.6 587.9 233.4 585.0 234.0 C582.1 234.6 570.4 238.8 568.0 240.0 C565.6 241.2 558.4 247.2 556.8 249.0 C555.2 250.8 549.8 259.8 549.0 262.0 C548.2 264.2 547.1 273.1 547.0 275.0 C546.9 276.9 547.0 284.1 547.6 284.9 C548.2 285.7 554.1 282.3 554.8 284.3 C555.4 286.3 556.1 307.0 555.4 309.3 C554.7 311.6 547.2 311.2 546.0 312.0 C544.8 312.8 540.8 318.0 540.5 319.0 C540.2 320.0 542.2 323.2 543.0 324.0 C543.8 324.8 549.0 328.2 550.0 329.0 C551.0 329.8 554.4 333.1 555.0 334.0 C555.6 334.9 556.7 339.1 557.0 340.0 C557.3 340.9 558.6 344.2 559.0 345.0 C559.4 345.8 561.2 349.1 562.0 350.0 C562.8 350.9 565.9 355.0 568.0 355.7 C570.1 356.4 585.3 356.5 586.9 358.0 C588.5 359.5 583.1 372.3 587.5 373.6 C591.9 374.9 635.4 374.0 640.0 373.6 C644.6 373.2 642.4 371.1 642.7 369.0 C643.0 366.9 643.0 350.2 643.5 348.0 C644.0 345.8 647.7 343.7 648.5 342.4 C649.3 341.1 652.8 333.8 653.6 332.4 C654.4 331.0 657.3 326.3 658.6 326.0 C659.9 325.7 667.1 329.4 668.7 329.0 C670.3 328.6 677.2 322.1 677.9 321.0 C678.6 319.9 678.0 316.8 677.0 316.4 C676.0 315.9 666.1 316.2 665.3 315.6 C664.5 315.0 666.7 310.7 667.0 309.0 C667.3 307.3 668.7 297.9 668.7 295.5 C668.7 293.1 667.4 283.1 667.0 280.4 C666.6 277.7 664.7 266.1 663.6 263.6 C662.5 261.1 655.6 252.1 653.6 250.0 C651.6 247.9 642.8 239.9 640.0 238.4 C637.2 236.9 623.1 233.0 620.0 232.5 C616.9 232.0 605.7 232.4 602.8 232.5 Z" fill="#fff" stroke="#fff" stroke-width="12.5" stroke-linejoin="round"/>
<path d="M531 340 C540 338 548 336 552 336 L559 346 C556 352 551 357 547 358 C541 352 535 346 531 340 Z" fill="#74634f" stroke="#5a4a3a" stroke-width="1"/>
<path d="M660 332 L686.3 339 C685 343 684 346 682 347.5 C678 350 674 352 670.3 352.5 C665 345 662 338 660 332 Z" fill="#74634f" stroke="#5a4a3a" stroke-width="1"/>
<path d="M602.8 232.5 C599.9 232.6 587.9 233.4 585.0 234.0 C582.1 234.6 570.4 238.8 568.0 240.0 C565.6 241.2 558.4 247.2 556.8 249.0 C555.2 250.8 549.8 259.8 549.0 262.0 C548.2 264.2 547.1 273.1 547.0 275.0 C546.9 276.9 547.0 284.1 547.6 284.9 C548.2 285.7 554.1 282.3 554.8 284.3 C555.4 286.3 556.1 307.0 555.4 309.3 C554.7 311.6 547.2 311.2 546.0 312.0 C544.8 312.8 540.8 318.0 540.5 319.0 C540.2 320.0 542.2 323.2 543.0 324.0 C543.8 324.8 549.0 328.2 550.0 329.0 C551.0 329.8 554.4 333.1 555.0 334.0 C555.6 334.9 556.7 339.1 557.0 340.0 C557.3 340.9 558.6 344.2 559.0 345.0 C559.4 345.8 561.2 349.1 562.0 350.0 C562.8 350.9 565.9 355.0 568.0 355.7 C570.1 356.4 585.3 356.5 586.9 358.0 C588.5 359.5 583.1 372.3 587.5 373.6 C591.9 374.9 635.4 374.0 640.0 373.6 C644.6 373.2 642.4 371.1 642.7 369.0 C643.0 366.9 643.0 350.2 643.5 348.0 C644.0 345.8 647.7 343.7 648.5 342.4 C649.3 341.1 652.8 333.8 653.6 332.4 C654.4 331.0 657.3 326.3 658.6 326.0 C659.9 325.7 667.1 329.4 668.7 329.0 C670.3 328.6 677.2 322.1 677.9 321.0 C678.6 319.9 678.0 316.8 677.0 316.4 C676.0 315.9 666.1 316.2 665.3 315.6 C664.5 315.0 666.7 310.7 667.0 309.0 C667.3 307.3 668.7 297.9 668.7 295.5 C668.7 293.1 667.4 283.1 667.0 280.4 C666.6 277.7 664.7 266.1 663.6 263.6 C662.5 261.1 655.6 252.1 653.6 250.0 C651.6 247.9 642.8 239.9 640.0 238.4 C637.2 236.9 623.1 233.0 620.0 232.5 C616.9 232.0 605.7 232.4 602.8 232.5 Z" fill="#e5dde3" stroke="#1e1814" stroke-width="2.6" stroke-linejoin="round"/>
<path d="M548 286 L555 285 L555.5 309 L547 311 C549 300 549 292 548 286 Z" fill="#74634f"/>
<path d="M664.5 262 C669 272 671 290 671 305 L667 305 C668 290 667 275 663 263 Z" fill="#74634f"/>
<path d="M562.0 252.0 C564.7 248.5 570.0 245.0 575.0 243.0 C580.0 241.0 587.0 240.5 592.0 240.0 C597.0 239.5 600.3 239.7 605.0 240.0 C609.7 240.3 614.8 240.8 620.0 242.0 C625.2 243.2 631.3 244.8 636.0 247.0 C640.7 249.2 645.0 251.8 648.0 255.0 C651.0 258.2 653.2 261.8 654.0 266.0 C654.8 270.2 654.0 275.8 653.0 280.0 C652.0 284.2 650.2 288.3 648.0 291.0 C645.8 293.7 643.3 295.5 640.0 296.0 C636.7 296.5 631.7 295.0 628.0 294.0 C624.3 293.0 621.7 291.2 618.0 290.0 C614.3 288.8 609.7 287.2 606.0 287.0 C602.3 286.8 600.0 288.8 596.0 289.0 C592.0 289.2 586.3 288.8 582.0 288.0 C577.7 287.2 573.3 286.0 570.0 284.0 C566.7 282.0 563.8 279.3 562.0 276.0 C560.2 272.7 559.0 268.0 559.0 264.0 C559.0 260.0 559.3 255.5 562.0 252.0 Z" fill="#c9a2bd" stroke="#7e5c74" stroke-width="1.3"/>
<path d="M600 283 C604 284 606 288 603 292 C606 296 602 301 597 299 C592 300 590 295 594 292 C596 289 598 286 600 283 Z" fill="#8fc43a" stroke="#6a9a28" stroke-width="1"/>
<path d="M588 300 L594 295" stroke="#444" stroke-width="0.8"/>
<path d="M606.4 313.0 L613.4 340.0 L617.0 372.0 L618.6 385.0 L624.6 387.6 L625.0 440.0 L624.5 470.0 L621.0 482.0 L614.0 485.0 L619.4 488.0 L612.0 510.0 L606.0 526.0 L601.0 537.0 L593.0 537.5 L598.3 558.0 L615.0 541.0 L610.2 538.5 L620.8 518.8 L630.0 499.0 L632.0 538.5 L628.5 541.0 L639.0 557.5 L649.0 541.0 L643.3 538.5 L642.5 500.0 L642.0 478.0 L636.0 474.0 L641.9 469.5 L641.0 420.0 L637.0 378.0 L636.8 373.0 L631.0 372.5 L624.6 340.0 L617.5 313.0 Z" fill="#fff" stroke="#f0a282" stroke-width="9" stroke-linejoin="miter" stroke-miterlimit="3"/>
<path d="M606.4 313.0 L613.4 340.0 L617.0 372.0 L618.6 385.0 L624.6 387.6 L625.0 440.0 L624.5 470.0 L621.0 482.0 L614.0 485.0 L619.4 488.0 L612.0 510.0 L606.0 526.0 L601.0 537.0 L593.0 537.5 L598.3 558.0 L615.0 541.0 L610.2 538.5 L620.8 518.8 L630.0 499.0 L632.0 538.5 L628.5 541.0 L639.0 557.5 L649.0 541.0 L643.3 538.5 L642.5 500.0 L642.0 478.0 L636.0 474.0 L641.9 469.5 L641.0 420.0 L637.0 378.0 L636.8 373.0 L631.0 372.5 L624.6 340.0 L617.5 313.0 Z" fill="#fff" stroke="#fff" stroke-width="6.5" stroke-linejoin="miter" stroke-miterlimit="3"/>
<path d="M571.4 542.7 C568.3 544.5 564.8 549.0 563.6 554.4 C562.4 559.8 562.7 573.0 563.6 578.7 C564.5 584.4 565.7 589.6 569.5 592.4 C573.3 595.2 584.3 595.6 589.0 597.3 C593.7 599.0 597.2 602.0 600.7 604.0 C604.2 606.0 608.9 610.9 612.4 610.9 C615.9 610.9 620.5 606.0 624.0 604.0 C627.5 602.0 630.8 599.0 635.8 597.3 C640.8 595.6 652.5 595.5 657.2 592.4 C661.9 589.3 665.7 583.2 667.0 576.8 C668.3 570.4 667.8 554.9 666.0 549.5 C664.2 544.1 658.1 542.2 655.3 540.7 C652.5 539.2 650.1 536.9 647.5 539.7 C644.9 542.5 640.2 555.8 637.7 559.2 C635.2 562.6 637.0 561.8 630.9 562.2 C624.8 562.7 602.8 562.9 596.8 562.2 C590.8 561.5 592.9 560.2 591.0 557.3 C589.1 554.4 586.9 544.9 584.0 542.7 C581.1 540.5 574.5 540.9 571.4 542.7 Z" fill="#fff" stroke="#f3bfae" stroke-width="1.3"/>
<path d="M606.4 313.0 L613.4 340.0 L617.0 372.0 L618.6 385.0 L624.6 387.6 L625.0 440.0 L624.5 470.0 L621.0 482.0 L614.0 485.0 L619.4 488.0 L612.0 510.0 L606.0 526.0 L601.0 537.0 L593.0 537.5 L598.3 558.0 L615.0 541.0 L610.2 538.5 L620.8 518.8 L630.0 499.0 L632.0 538.5 L628.5 541.0 L639.0 557.5 L649.0 541.0 L643.3 538.5 L642.5 500.0 L642.0 478.0 L636.0 474.0 L641.9 469.5 L641.0 420.0 L637.0 378.0 L636.8 373.0 L631.0 372.5 L624.6 340.0 L617.5 313.0 Z" fill="#7dbb2a"/>
<path d="M629.5 414 L632 478" stroke="#eef5e0" stroke-width="4" stroke-dasharray="4 3"/>
<path d="M634.5 408 L635 420" stroke="#e8f2d8" stroke-width="2" stroke-dasharray="2 1.5"/>
<path d="M611 549 q4 -4 8 0 q-2 4 -8 0" fill="#3a2a22"/>
<g transform="translate(581 547) rotate(-95) scale(1.25)"><path d="M-5 -1.6 H1.5 V-4.2 L6 0 L1.5 4.2 V1.6 H-5 Z" fill="#f9b044" stroke="#f26a1e" stroke-width="0.7"/></g>
<g transform="translate(574 557) rotate(-115) scale(1.25)"><path d="M-5 -1.6 H1.5 V-4.2 L6 0 L1.5 4.2 V1.6 H-5 Z" fill="#f9b044" stroke="#f26a1e" stroke-width="0.7"/></g>
<g transform="translate(582 558) rotate(-120) scale(1.25)"><path d="M-5 -1.6 H1.5 V-4.2 L6 0 L1.5 4.2 V1.6 H-5 Z" fill="#f9b044" stroke="#f26a1e" stroke-width="0.7"/></g>
<g transform="translate(574 574) rotate(-170) scale(1.25)"><path d="M-5 -1.6 H1.5 V-4.2 L6 0 L1.5 4.2 V1.6 H-5 Z" fill="#f9b044" stroke="#f26a1e" stroke-width="0.7"/></g>
<g transform="translate(581 590) rotate(150) scale(1.25)"><path d="M-5 -1.6 H1.5 V-4.2 L6 0 L1.5 4.2 V1.6 H-5 Z" fill="#f9b044" stroke="#f26a1e" stroke-width="0.7"/></g>
<g transform="translate(657 553) rotate(-75) scale(1.25)"><path d="M-5 -1.6 H1.5 V-4.2 L6 0 L1.5 4.2 V1.6 H-5 Z" fill="#f9b044" stroke="#f26a1e" stroke-width="0.7"/></g>
<g transform="translate(647 559) rotate(-60) scale(1.25)"><path d="M-5 -1.6 H1.5 V-4.2 L6 0 L1.5 4.2 V1.6 H-5 Z" fill="#f9b044" stroke="#f26a1e" stroke-width="0.7"/></g>
<g transform="translate(658 569) rotate(-40) scale(1.25)"><path d="M-5 -1.6 H1.5 V-4.2 L6 0 L1.5 4.2 V1.6 H-5 Z" fill="#f9b044" stroke="#f26a1e" stroke-width="0.7"/></g>
<g transform="translate(658 582) rotate(-25) scale(1.25)"><path d="M-5 -1.6 H1.5 V-4.2 L6 0 L1.5 4.2 V1.6 H-5 Z" fill="#f9b044" stroke="#f26a1e" stroke-width="0.7"/></g>
<g transform="translate(646 590) rotate(40) scale(1.25)"><path d="M-5 -1.6 H1.5 V-4.2 L6 0 L1.5 4.2 V1.6 H-5 Z" fill="#f9b044" stroke="#f26a1e" stroke-width="0.7"/></g>
<path d="M597 568 C593 563 588 565 585 569 M586 566 L583 563 M588 565 L587 561" fill="none" stroke="#9a7a8a" stroke-width="2.6"/>
<path d="M631 568 C635 563 640 565 643 569 M642 566 L645 563 M640 565 L641 561" fill="none" stroke="#9a7a8a" stroke-width="2.6"/>
<path d="M597 568 C593 564 588 566 586 569 M631 568 C635 564 640 566 642 569" fill="none" stroke="#e8a8c8" stroke-width="1.4"/>
<path d="M604 570 C604 565 624 565 624 570 C624 580 621 586 619 590 C621 598 620 606 614 608.5 C608 606 607 598 609 590 C607 586 604 580 604 570 Z" fill="#e8a8c8" stroke="#7a6a74" stroke-width="1.3"/>
<path d="M608.5 571.5 L619.5 571.5 L614 583 Z" fill="#f5d0e2" stroke="#9a7a8a" stroke-width="0.8"/>
<path d="M611 593 L617 593 L614 606 Z" fill="#9a7088"/>
<ellipse cx="592" cy="574.5" rx="5.2" ry="4" fill="#d8401a" stroke="#f07a3a" stroke-width="0.8"/>
<ellipse cx="637.5" cy="574.5" rx="5.2" ry="4" fill="#d8401a" stroke="#f07a3a" stroke-width="0.8"/>
<path d="M593 583 H600 M629 583 H636 M572 580 H581 M626 591 H637" stroke="#f0603a" stroke-width="1.6" stroke-dasharray="1.5 0.8"/>
<rect x="604.5" y="617" width="20" height="69" rx="7" fill="#fff" stroke="#f0c0b0" stroke-width="1.2"/>
<path d="M614.5 621 C617 625 621.5 628 621.5 633 C621.5 638.5 607.5 638.5 607.5 633 C607.5 628 612 625 614.5 621 Z" fill="#c8184a" stroke="#f49a2a" stroke-width="1.8"/>
<path d="M614.5 641 C617 645 621.5 648 621.5 653 C621.5 658.5 607.5 658.5 607.5 653 C607.5 648 612 645 614.5 641 Z" fill="#c8184a" stroke="#f49a2a" stroke-width="1.8"/>
<path d="M614.5 660.5 C617 664.5 621.5 667.5 621.5 672.5 C621.5 678.0 607.5 678.0 607.5 672.5 C607.5 667.5 612 664.5 614.5 660.5 Z" fill="#c8184a" stroke="#f49a2a" stroke-width="1.8"/>
<rect x="692" y="264.5" width="98" height="57" fill="#dfe9a9" stroke="#e3ecb8" stroke-width="1"/>
<rect x="675.2" y="551.6" width="110" height="47.4" fill="#f8d48c" stroke="#f3cb80" stroke-width="1.5"/>
<rect x="490" y="619.2" width="81.5" height="49.5" fill="#e6f2fa" stroke="#f6c6b4" stroke-width="2"/>
<rect x="658.8" y="621.2" width="81.2" height="50" fill="#e6f2fa" stroke="#f6c6b4" stroke-width="2"/>
<path d="M703.9 291.3 L724.1 291.3 M713.4 291.3 L713.4 311.3 M714.0 296.2 L722.9 302.6" fill="none" stroke="#231815" stroke-width="2.4" stroke-linecap="butt" stroke-linejoin="miter"/>
<path d="M747.0 290.4 L733.9 293.0 M730.8 295.5 L750.9 295.5 M740.9 293.0 L740.9 310.2 M733.3 300.6 L748.4 300.6 M735.1 297.2 L735.1 305.1 M746.4 297.2 L746.4 305.1 M732.0 305.1 L749.7 305.1 M731.0 310.2 L750.3 310.2" fill="none" stroke="#231815" stroke-width="2.4" stroke-linecap="butt" stroke-linejoin="miter"/>
<path d="M761.8 290.2 L756.0 301.5 M759.6 296.6 L759.6 311.3 M763.2 295.3 L777.9 295.3 M770.1 290.2 L770.1 311.3 M770.1 296.0 L763.2 306.6 M770.1 296.0 L778.1 306.6 M765.6 306.0 L774.5 306.0" fill="none" stroke="#231815" stroke-width="2.4" stroke-linecap="butt" stroke-linejoin="miter"/>
<path d="M684.2 571.7 L695.5 571.7 M690.1 564.6 L686.6 574.5 L686.2 579.0 L695.2 586.8 M693.8 571.7 L691.8 579.7 L684.5 586.3" fill="none" stroke="#1e1a1a" stroke-width="2.0" stroke-linecap="butt" stroke-linejoin="miter"/>
<path d="M701.8 563.9 L701.8 587.5 M699.7 571.7 L699.7 575.2 M703.5 570.3 L704.2 572.4 M706.3 565.1 L705.2 572.4 M705.5 570.3 L710.7 570.3 M708.3 565.1 L708.3 586.3 M706.3 577.8 L710.4 577.8 M703.8 586.3 L711.1 586.3" fill="none" stroke="#1e1a1a" stroke-width="2.0" stroke-linecap="butt" stroke-linejoin="miter"/>
<path d="M716.8 571.7 L727.2 571.7 M722.2 565.1 L722.2 586.3 L721.5 585.6 M719.8 576.9 L717.4 584.9 M724.8 576.9 L727.2 583.5" fill="none" stroke="#1e1a1a" stroke-width="2.0" stroke-linecap="butt" stroke-linejoin="miter"/>
<path d="M734.3 567.2 L734.3 578.3 L731.9 586.3 M738.4 565.1 L738.4 585.6 L742.8 579.7" fill="none" stroke="#1e1a1a" stroke-width="2.0" stroke-linecap="butt" stroke-linejoin="miter"/>
<path d="M749.0 568.6 L757.4 568.6 M748.0 575.7 L758.1 575.7 M752.3 568.6 L752.3 584.2 L757.4 584.9" fill="none" stroke="#1e1a1a" stroke-width="2.0" stroke-linecap="butt" stroke-linejoin="miter"/>
<path d="M765.1 570.3 L767.1 573.1 M764.8 585.6 L768.4 582.3 L771.6 576.9 L774.2 569.3" fill="none" stroke="#1e1a1a" stroke-width="2.0" stroke-linecap="butt" stroke-linejoin="miter"/>
<path d="M512.0 641.9 L512.0 649.8 L511.2 654.1 L509.3 656.9 L506.8 658.5 M512.0 641.9 L521.0 641.9 L521.0 656.9 L518.8 658.5 M512.0 647.7 L521.0 647.7 M512.0 653.2 L521.0 653.2" fill="none" stroke="#8b1f6f" stroke-width="2.4" stroke-linecap="butt" stroke-linejoin="miter"/>
<path d="M542.6 640.6 L540.2 645.5 L543.4 645.5 M544.3 643.3 L540.2 649.8 L544.9 649.1 M542.6 648.7 L542.6 658.5 M541.1 652.5 L540.0 656.9 M544.0 652.0 L545.1 654.7 M547.6 642.2 L555.7 642.2 L548.1 648.2 M548.7 643.8 L556.7 648.7 M548.1 652.0 L556.7 652.0 M552.5 648.7 L552.5 657.4 M546.4 657.4 L558.4 657.4" fill="none" stroke="#8b1f6f" stroke-width="2.2" stroke-linecap="butt" stroke-linejoin="miter"/>
<path d="M678.4 643.0 L679.5 645.0 M674.7 647.1 L681.6 647.1 L674.7 655.2 M677.9 650.8 L677.9 661.3 M679.5 651.9 L681.6 654.6 M683.4 644.5 L690.7 644.5 L690.7 659.5 L686.5 659.5 M687.0 644.5 L686.5 651.9 L682.6 660.6" fill="none" stroke="#8b1f6f" stroke-width="2.4" stroke-linecap="butt" stroke-linejoin="miter"/>
<path d="M708.8 642.6 L706.3 647.5 L709.5 647.5 M710.5 645.3 L706.3 651.8 L711.0 651.1 M708.8 650.7 L708.8 660.5 M707.3 654.5 L706.2 658.9 M710.1 654.0 L711.2 656.7 M713.6 644.2 L721.7 644.2 L714.2 650.2 M714.8 645.8 L722.6 650.7 M714.2 654.0 L722.6 654.0 M718.5 650.7 L718.5 659.4 M712.5 659.4 L724.3 659.4" fill="none" stroke="#8b1f6f" stroke-width="2.2" stroke-linecap="butt" stroke-linejoin="miter"/>
<path d="M407 215 L462 215 L407 270 Z" fill="#5b3a9c"/>
<path d="M852 215 L907 215 L852 270 Z" fill="#5b3a9c"/>
<path d="M419 272 L465 227" stroke="#6a48a8" stroke-width="3.6" stroke-dasharray="2.2 0.8"/>
<path d="M855 272 L910 217" stroke="#6a48a8" stroke-width="3.6" stroke-dasharray="2.2 0.8"/>
<path d="M416 267 L437 247" stroke="#8a6ac0" stroke-width="1.6" stroke-dasharray="1.5 1.5"/>
<path d="M861 267 L882 247" stroke="#8a6ac0" stroke-width="1.6" stroke-dasharray="1.5 1.5"/>
<path d="M414 252 L432 235" stroke="#ece4f8" stroke-width="4" stroke-dasharray="3 1"/><circle cx="436.5" cy="230.5" r="2.6" fill="none" stroke="#ece4f8" stroke-width="1"/>
<path d="M859 252 L877 235" stroke="#ece4f8" stroke-width="4" stroke-dasharray="3 1"/><circle cx="881.5" cy="230.5" r="2.6" fill="none" stroke="#ece4f8" stroke-width="1"/>
<rect x="710.5" y="809" width="49" height="9" fill="#fff3a8"/><path d="M712.5 814.5 H757.5" stroke="#5a2aa0" stroke-width="4" stroke-dasharray="2.5 1"/><path d="M761.5 812 H775.5 M761.5 816 H798.5" stroke="#2a2040" stroke-width="2.2" stroke-dasharray="1.6 0.8"/>
<rect x="1160" y="813" width="49" height="9" fill="#fff3a8"/><path d="M1162 818.5 H1207" stroke="#5a2aa0" stroke-width="4" stroke-dasharray="2.5 1"/><path d="M1211 816 H1225 M1211 820 H1248" stroke="#2a2040" stroke-width="2.2" stroke-dasharray="1.6 0.8"/>
<path d="M1021.0 340.0 C1013.6 342.1 1021.0 354.3 1021.0 358.0 C1021.0 361.7 1021.5 369.4 1021.0 372.0 C1020.5 374.6 1019.0 378.4 1017.0 380.0 C1015.0 381.6 1007.7 384.3 1004.0 385.5 C1000.3 386.7 989.3 388.3 985.0 390.0 C980.7 391.7 971.4 396.7 967.5 399.7 C963.6 402.7 955.2 409.8 951.9 416.0 C948.6 422.2 941.0 443.6 939.0 452.8 C937.0 462.0 936.3 486.1 935.0 495.0 C933.7 503.9 928.9 522.4 928.0 528.8 C927.1 535.2 927.0 546.4 927.0 550.0 C927.0 553.6 927.7 556.9 928.1 560.0 C928.5 563.1 931.0 574.1 930.2 576.9 C929.4 579.7 923.4 582.4 921.1 583.9 C918.8 585.4 911.6 588.3 910.5 589.5 C909.4 590.7 909.7 593.8 911.3 594.5 C912.9 595.2 922.4 593.6 923.9 595.2 C925.4 596.8 923.4 606.7 923.9 608.5 C924.4 610.3 927.0 612.0 928.1 610.6 C929.2 609.2 931.7 596.6 933.0 596.6 C934.3 596.6 938.2 609.1 939.4 610.6 C940.6 612.1 943.0 610.9 943.6 609.2 C944.2 607.5 943.5 596.0 944.3 595.9 C945.1 595.8 949.4 607.2 950.6 608.5 C951.8 609.8 954.5 608.7 954.9 607.1 C955.3 605.5 953.4 595.0 954.2 594.5 C955.0 594.0 960.8 602.3 961.9 602.9 C963.0 603.5 964.0 601.0 964.0 599.4 C964.0 597.8 963.0 592.0 961.9 589.5 C960.8 587.0 955.6 581.7 954.9 578.3 C954.2 574.9 955.3 564.8 955.6 560.0 C955.9 555.2 955.8 544.0 957.5 537.0 C959.2 530.0 966.6 510.0 970.0 500.0 C973.4 490.0 984.4 452.2 987.0 451.0 C989.6 449.8 991.2 480.9 992.0 490.0 C992.8 499.1 995.4 521.7 994.0 528.8 C992.6 535.9 982.4 546.1 980.0 551.0 C977.6 555.9 974.7 564.8 973.8 570.5 C972.9 576.2 972.0 593.6 972.0 600.0 C972.0 606.4 971.9 617.8 973.4 625.0 C974.9 632.2 982.4 652.7 984.6 662.0 C986.8 671.3 991.6 697.2 992.0 704.5 C992.4 711.8 988.7 717.7 988.3 724.4 C987.9 731.1 988.1 754.0 988.3 761.8 C988.5 769.6 991.2 787.3 989.6 791.6 C988.0 795.9 978.8 797.2 975.0 799.0 C971.2 800.8 959.6 804.6 957.2 806.6 C954.8 808.6 953.0 815.1 954.7 816.5 C956.4 817.9 965.0 818.7 972.0 819.0 C979.0 819.3 1009.1 820.2 1014.4 819.0 C1019.6 817.8 1017.0 814.2 1017.0 809.0 C1017.0 803.8 1013.2 785.3 1014.4 774.0 C1015.6 762.7 1023.7 726.5 1026.9 712.0 C1030.1 697.5 1039.2 662.9 1041.8 649.8 C1044.4 636.7 1048.3 606.9 1049.3 600.0 C1050.3 593.1 1048.9 591.5 1050.0 591.0 C1051.1 590.5 1056.8 596.0 1058.8 596.0 C1060.8 596.0 1066.1 590.5 1067.0 591.0 C1067.9 591.5 1065.9 593.1 1066.7 600.0 C1067.5 606.9 1071.7 637.6 1074.0 649.8 C1076.3 662.0 1085.4 695.8 1086.6 704.5 C1087.8 713.2 1083.4 717.7 1084.0 724.4 C1084.6 731.1 1090.4 753.7 1091.6 761.8 C1092.8 769.9 1093.4 787.6 1094.0 794.0 C1094.6 800.4 1094.3 813.6 1096.6 816.5 C1098.9 819.4 1106.7 819.3 1114.0 819.0 C1121.3 818.7 1153.9 815.4 1158.8 814.0 C1163.7 812.6 1158.5 808.4 1156.3 806.6 C1154.1 804.9 1143.5 800.8 1140.0 799.0 C1136.5 797.2 1128.3 802.3 1126.4 791.6 C1124.5 780.9 1123.6 720.0 1124.0 707.0 C1124.4 694.0 1128.6 688.2 1130.0 680.0 C1131.4 671.8 1135.2 645.2 1136.4 637.0 C1137.6 628.8 1139.8 616.0 1140.2 610.0 C1140.6 604.0 1140.9 591.5 1140.2 586.0 C1139.5 580.5 1135.9 568.2 1133.8 563.0 C1131.7 557.8 1124.3 545.8 1121.8 541.8 C1119.3 537.8 1112.9 534.8 1112.0 528.8 C1111.1 522.8 1113.3 499.1 1114.0 490.0 C1114.7 480.9 1115.2 449.8 1117.8 451.0 C1120.4 452.2 1132.3 489.6 1136.0 500.0 C1139.7 510.4 1146.2 531.2 1149.4 540.0 C1152.6 548.8 1161.6 570.4 1163.2 575.0 C1164.8 579.6 1164.5 577.9 1163.2 579.6 C1161.9 581.3 1153.2 588.2 1152.2 589.7 C1151.2 591.2 1153.6 592.5 1155.0 592.4 C1156.4 592.3 1163.2 587.7 1164.2 588.8 C1165.2 589.9 1163.0 599.9 1163.2 601.6 C1163.4 603.3 1165.0 604.8 1166.0 603.5 C1167.0 602.2 1170.3 590.5 1171.5 590.6 C1172.7 590.7 1175.1 603.0 1176.1 604.4 C1177.1 605.8 1179.2 604.3 1179.8 602.6 C1180.4 600.9 1180.6 590.0 1181.6 589.7 C1182.6 589.4 1187.0 598.8 1188.1 599.8 C1189.2 600.8 1190.6 599.6 1190.8 598.0 C1191.0 596.4 1188.9 587.4 1190.0 586.0 C1191.1 584.6 1198.4 586.4 1200.0 586.0 C1201.6 585.6 1203.8 583.0 1203.7 582.3 C1203.6 581.6 1201.0 580.6 1199.0 579.6 C1197.0 578.6 1187.9 575.9 1186.2 574.0 C1184.5 572.1 1185.1 567.0 1184.4 563.0 C1183.7 559.0 1181.2 546.2 1179.8 540.0 C1178.4 533.8 1173.5 515.2 1172.0 510.0 C1170.5 504.8 1167.9 499.4 1167.0 495.0 C1166.1 490.6 1165.5 480.1 1164.0 472.5 C1162.5 464.9 1157.5 438.2 1154.4 430.0 C1151.3 421.8 1141.7 406.9 1137.5 402.0 C1133.3 397.1 1122.4 390.6 1118.0 388.0 C1113.6 385.4 1103.4 381.4 1100.0 380.0 C1096.6 378.6 1090.7 377.2 1089.0 376.0 C1087.3 374.8 1086.1 372.3 1085.5 370.0 C1084.9 367.7 1084.2 359.5 1084.0 356.0 C1083.8 352.5 1091.3 341.9 1084.0 340.0 C1076.7 338.1 1028.3 337.9 1021.0 340.0 Z" fill="#fcdbd2" stroke="#3b3a2b" stroke-width="3.6" stroke-linejoin="round"/>
<path d="M989 326 L976.5 347 Q985 356 997 357 L1002 338 Z" fill="#7a6a57" stroke="#3b3a2b" stroke-width="3" stroke-linejoin="round"/>
<path d="M1102 326 L1122 336 Q1116 347 1108 351 L1096 340 Z" fill="#7a6a57" stroke="#3b3a2b" stroke-width="3" stroke-linejoin="round"/>
<ellipse cx="984" cy="317" rx="7" ry="9" fill="#fcdbd2" stroke="#3b3a2b" stroke-width="3"/>
<ellipse cx="1111" cy="316" rx="7" ry="9" fill="#fcdbd2" stroke="#3b3a2b" stroke-width="3"/>
<path d="M982.7 300.8 C982.0 297.4 982.3 288.6 983.7 281.8 C985.1 275.0 987.8 262.1 992.2 255.3 C996.6 248.5 1003.9 240.2 1013.0 236.4 C1022.1 232.6 1042.3 230.3 1052.8 229.7 C1063.3 229.1 1075.5 229.9 1083.2 232.6 C1090.9 235.3 1099.5 241.7 1104.0 247.7 C1108.5 253.7 1112.2 264.4 1113.5 272.4 C1114.8 280.4 1113.4 296.0 1112.5 300.8 C1111.6 305.6 1108.8 301.2 1107.8 304.6 C1106.8 308.0 1107.0 318.1 1105.9 323.5 C1104.8 328.9 1103.6 335.5 1100.2 340.6 C1096.8 345.7 1090.3 354.0 1083.2 357.6 C1076.1 361.2 1061.9 364.3 1052.8 364.3 C1043.7 364.3 1029.9 360.9 1022.5 357.6 C1015.1 354.3 1008.1 347.6 1003.6 342.5 C999.1 337.4 994.5 329.2 992.2 323.5 C989.9 317.8 989.8 308.0 988.4 304.6 C987.0 301.2 983.4 304.2 982.7 300.8 Z" fill="#fcdbd2" stroke="#3b3a2b" stroke-width="3.6" stroke-linejoin="round"/>
<path d="M982.7 300.8 C982.1 297.8 982.4 287.9 983.7 281.8 C985.0 275.7 988.3 261.4 992.2 255.3 C996.1 249.2 1004.9 239.8 1013.0 236.4 C1021.1 233.0 1043.4 230.2 1052.8 229.7 C1062.2 229.2 1076.4 230.2 1083.2 232.6 C1090.0 235.0 1100.0 242.4 1104.0 247.7 C1108.0 253.0 1112.4 265.3 1113.5 272.4 C1114.6 279.5 1113.3 297.0 1112.5 300.8 C1111.7 304.6 1113.0 304.1 1107.8 300.8 C1102.6 297.5 1081.3 281.5 1073.7 276.2 C1066.1 270.9 1058.6 260.0 1051.0 261.0 C1043.4 262.0 1025.1 277.9 1016.8 283.7 C1008.5 289.5 992.9 302.3 988.4 304.6 C983.9 306.9 983.3 303.8 982.7 300.8 Z" fill="#7a6a57" stroke="#3b3a2b" stroke-width="3.6" stroke-linejoin="round"/>
<circle cx="1028.2" cy="317.8" r="7" fill="#fff" stroke="#3b3a2b" stroke-width="3"/>
<circle cx="1028.2" cy="317.8" r="2.6" fill="#3b3a2b"/>
<circle cx="1075.6" cy="317.8" r="7" fill="#fff" stroke="#3b3a2b" stroke-width="3"/>
<circle cx="1075.6" cy="317.8" r="2.6" fill="#3b3a2b"/>
<path d="M1022 298 Q1029 292 1036 298 M1071 297 Q1078 292 1085 298" fill="none" stroke="#3b3a2b" stroke-width="2.6" stroke-linecap="round"/>
<path d="M1052.5 321 C1046 321 1043 332 1048 333 L1058 333 C1063 332 1059 321 1052.5 321 Z" fill="#f2a8a8" stroke="#3b3a2b" stroke-width="3" stroke-linejoin="round"/>
<path d="M1043 342 Q1054 351 1066 342" fill="none" stroke="#3b3a2b" stroke-width="3" stroke-linecap="round"/>
<circle cx="1045" cy="286" r="1.1" fill="#d8503a"/>
<circle cx="1049" cy="284" r="1.1" fill="#d8503a"/>
<circle cx="1053" cy="285" r="1.1" fill="#d8503a"/>
<circle cx="1058" cy="284" r="1.1" fill="#d8503a"/>
<circle cx="1047" cy="289" r="1.1" fill="#d8503a"/>
<circle cx="1055" cy="288" r="1.1" fill="#d8503a"/>
<circle cx="1009" cy="324" r="1.1" fill="#d8503a"/>
<circle cx="1013" cy="326" r="1.1" fill="#d8503a"/>
<circle cx="1016" cy="329" r="1.1" fill="#d8503a"/>
<circle cx="1011" cy="330" r="1.1" fill="#d8503a"/>
<circle cx="1014" cy="334" r="1.1" fill="#d8503a"/>
<circle cx="1090" cy="325" r="1.1" fill="#d8503a"/>
<circle cx="1094" cy="327" r="1.1" fill="#d8503a"/>
<circle cx="1086" cy="328" r="1.1" fill="#d8503a"/>
<circle cx="1090" cy="331" r="1.1" fill="#d8503a"/>
<circle cx="1094" cy="334" r="1.1" fill="#d8503a"/>
<path d="M1025 392 Q1037 394 1046 399 M1067 397 Q1075 391 1084 389.5" fill="none" stroke="#a8702e" stroke-width="3" stroke-linecap="round"/>
<path d="M1000 452 Q1021 481 1042 453 M1064 452 Q1086 481 1106.6 452" fill="none" stroke="#d4553f" stroke-width="2.3" stroke-linecap="round"/>
<circle cx="1021" cy="450" r="2.6" fill="none" stroke="#d4553f" stroke-width="1.5"/><circle cx="1087" cy="450" r="2.6" fill="none" stroke="#d4553f" stroke-width="1.5"/>
<path d="M981 448.6 H993 M987 442.6 V454.6 M982.5 444.1 L991.5 453.1 M991.5 444.1 L982.5 453.1" stroke="#1e1a14" stroke-width="2"/>
<circle cx="987" cy="448.6" r="2.5" fill="#1e1a14"/>
<path d="M1111.8 445.8 H1123.8 M1117.8 439.8 V451.8 M1113.3 441.3 L1122.3 450.3 M1122.3 441.3 L1113.3 450.3" stroke="#1e1a14" stroke-width="2"/>
<circle cx="1117.8" cy="445.8" r="2.5" fill="#1e1a14"/>
<ellipse cx="1058" cy="541.5" rx="3" ry="2" fill="#2a2a20"/>
<path d="M1016.6 574 Q1025 576 1030.6 581 M1084 579.4 Q1090 574 1096.8 572.4" fill="none" stroke="#a8702e" stroke-width="2.5" stroke-linecap="round"/>
<path d="M1051 584 L1052 580 M1054 582 L1055 578 M1058 581 L1058 577 M1061 581 L1061 577 M1064 582 L1065 578 M1067 584 L1069 580" stroke="#222" stroke-width="1.4"/></svg>
<!-- texts -->
<div class="t f" style="left:31.6px;top:16.6px;font-size:12px;color:#fff;--w:44.8">自動保存</div>
<div class="t f" style="left:97.0px;top:18.5px;font-size:9px;color:#fff;--w:15.0">オフ</div>
<div class="t f" style="left:330.6px;top:16.6px;font-size:12px;color:#fff;--w:162.4">プレゼンテーション1&nbsp; - &nbsp;PowerPoint</div>
<div class="t f" style="left:605.5px;top:16.0px;font-size:12px;color:#6a2a1a;--w:21.5">検索</div>
<div class="t f" style="left:23.8px;top:46.9px;font-size:13px;color:#3a3a3a;--w:34.6">ファイル</div>
<div class="t f" style="left:86.0px;top:46.9px;font-size:13px;color:#262626;font-weight:bold;--w:30.4">ホーム</div>
<div class="t f" style="left:142.4px;top:46.9px;font-size:13px;color:#3a3a3a;--w:23.6">挿入</div>
<div class="t f" style="left:192.5px;top:46.9px;font-size:13px;color:#3a3a3a;--w:39.5">デザイン</div>
<div class="t f" style="left:258.8px;top:46.9px;font-size:13px;color:#3a3a3a;--w:65.2">画面切り替え</div>
<div class="t f" style="left:351.5px;top:46.9px;font-size:13px;color:#3a3a3a;--w:63.1">アニメーション</div>
<div class="t f" style="left:444.2px;top:46.9px;font-size:13px;color:#3a3a3a;--w:65.1">スライド ショー</div>
<div class="t f" style="left:539.3px;top:46.9px;font-size:13px;color:#3a3a3a;--w:23.7">記録</div>
<div class="t f" style="left:588.7px;top:46.9px;font-size:13px;color:#3a3a3a;--w:24.0">校閲</div>
<div class="t f" style="left:638.0px;top:46.9px;font-size:13px;color:#3a3a3a;--w:24.6">表示</div>
<div class="t f" style="left:687.4px;top:46.9px;font-size:13px;color:#3a3a3a;--w:30.1">ヘルプ</div>
<div class="t f" style="left:746.4px;top:46.9px;font-size:13px;color:#3a3a3a;--w:46.1">Acrobat</div>
<div class="t f" style="left:1327.0px;top:46.5px;font-size:12px;color:#b23a1e;font-weight:bold;--w:23.0">記録</div>
<div class="t f" style="left:1390.0px;top:46.5px;font-size:12px;color:#b23a1e;font-weight:bold;--w:24.0">共有</div>
<div class="t f" style="left:23.0px;top:143.0px;font-size:12px;color:#333;--w:55.3">クリップボード</div>
<div class="t f" style="left:160.5px;top:143.0px;font-size:12px;color:#333;--w:32.0">スライド</div>
<div class="t f" style="left:363.0px;top:143.0px;font-size:12px;color:#333;--w:30.0">フォント</div>
<div class="t f" style="left:657.3px;top:143.0px;font-size:12px;color:#333;--w:23.7">段落</div>
<div class="t f" style="left:974.5px;top:143.0px;font-size:12px;color:#333;--w:44.8">図形描画</div>
<div class="t f" style="left:1207.4px;top:143.0px;font-size:12px;color:#333;--w:25.2">編集</div>
<div class="t f" style="left:1265.5px;top:143.0px;font-size:12px;color:#333;--w:79.1">Adobe Acrobat</div>
<div class="t f" style="left:1355.4px;top:143.0px;font-size:12px;color:#333;--w:45.0">デザイナー</div>
<div class="t f" style="left:21.0px;top:105.3px;font-size:12px;color:#333;--w:39.0">貼り付け</div>
<div class="t f" style="left:122.5px;top:105.3px;font-size:12px;color:#333;--w:29.4">新しい</div>
<svg class="a" style="left:149.0px;top:124.0px" width="8" height="5" viewBox="0 0 8 5"><path d="M1 1 L4 4 L7 1" fill="none" stroke="#333" stroke-width="1.1"/></svg>
<div class="t f" style="left:114.7px;top:120.0px;font-size:12px;color:#333;--w:31.3">スライド</div>
<svg class="a" style="left:225.0px;top:79.0px" width="8" height="5" viewBox="0 0 8 5"><path d="M1 1 L4 4 L7 1" fill="none" stroke="#333" stroke-width="1.1"/></svg>
<div class="t f" style="left:181.3px;top:75.0px;font-size:12px;color:#333;--w:40.7">レイアウト</div>
<div class="t f" style="left:181.3px;top:97.5px;font-size:12px;color:#333;--w:31.1">リセット</div>
<svg class="a" style="left:224.3px;top:124.0px" width="8" height="5" viewBox="0 0 8 5"><path d="M1 1 L4 4 L7 1" fill="none" stroke="#333" stroke-width="1.1"/></svg>
<div class="t f" style="left:181.3px;top:120.0px;font-size:12px;color:#333;--w:40.0">セクション</div>
<svg class="a" style="left:785.6px;top:79.4px" width="8" height="5" viewBox="0 0 8 5"><path d="M1 1 L4 4 L7 1" fill="none" stroke="#a8a8a8" stroke-width="1.1"/></svg>
<div class="t f" style="left:717.4px;top:75.4px;font-size:12px;color:#a8a8a8;--w:65.2">文字列の方向</div>
<svg class="a" style="left:773.8px;top:102.0px" width="8" height="5" viewBox="0 0 8 5"><path d="M1 1 L4 4 L7 1" fill="none" stroke="#a8a8a8" stroke-width="1.1"/></svg>
<div class="t f" style="left:717.4px;top:98.0px;font-size:12px;color:#a8a8a8;--w:53.4">文字の配置</div>
<svg class="a" style="left:806.0px;top:124.7px" width="8" height="5" viewBox="0 0 8 5"><path d="M1 1 L4 4 L7 1" fill="none" stroke="#a8a8a8" stroke-width="1.1"/></svg>
<div class="t f" style="left:717.4px;top:120.7px;font-size:12px;color:#a8a8a8;--w:85.6">SmartArt に変換</div>
<div class="t f" style="left:977.0px;top:106.3px;font-size:12px;color:#333;--w:23.6">配置</div>
<div class="t f" style="left:1018.0px;top:105.0px;font-size:12px;color:#a8a8a8;--w:30.0">クイック</div>
<svg class="a" style="left:1045.0px;top:124.0px" width="8" height="5" viewBox="0 0 8 5"><path d="M1 1 L4 4 L7 1" fill="none" stroke="#a8a8a8" stroke-width="1.1"/></svg>
<div class="t f" style="left:1011.8px;top:120.0px;font-size:12px;color:#a8a8a8;--w:30.2">スタイル</div>
<svg class="a" style="left:1158.0px;top:79.2px" width="8" height="5" viewBox="0 0 8 5"><path d="M1 1 L4 4 L7 1" fill="none" stroke="#a8a8a8" stroke-width="1.1"/></svg>
<div class="t f" style="left:1079.0px;top:75.2px;font-size:12px;color:#a8a8a8;--w:76.0">図形の塗りつぶし</div>
<svg class="a" style="left:1134.6px;top:100.4px" width="8" height="5" viewBox="0 0 8 5"><path d="M1 1 L4 4 L7 1" fill="none" stroke="#a8a8a8" stroke-width="1.1"/></svg>
<div class="t f" style="left:1079.0px;top:96.4px;font-size:12px;color:#a8a8a8;--w:52.6">図形の枠線</div>
<svg class="a" style="left:1134.6px;top:121.5px" width="8" height="5" viewBox="0 0 8 5"><path d="M1 1 L4 4 L7 1" fill="none" stroke="#a8a8a8" stroke-width="1.1"/></svg>
<div class="t f" style="left:1079.0px;top:117.5px;font-size:12px;color:#a8a8a8;--w:52.6">図形の効果</div>
<div class="t f" style="left:1207.9px;top:75.6px;font-size:12px;color:#333;--w:21.6">検索</div>
<div class="t f" style="left:1207.9px;top:97.2px;font-size:12px;color:#333;--w:21.6">置換</div>
<div class="t f" style="left:1207.9px;top:117.9px;font-size:12px;color:#333;--w:21.6">選択</div>
<div class="t f" style="left:1269.0px;top:106.2px;font-size:12px;color:#333;--w:72.0">Adobe PDF の</div>
<div class="t f" style="left:1269.0px;top:119.7px;font-size:12px;color:#333;--w:71.0">作成および共有</div>
<div class="t f" style="left:1368.0px;top:106.2px;font-size:12px;color:#333;--w:20.7">デザ</div>
<div class="t f" style="left:1364.4px;top:119.7px;font-size:12px;color:#333;--w:26.1">イナー</div>
<div class="t f" style="left:17.3px;top:899.0px;font-size:12px;color:#444;--w:55.4">スライド 1/1</div>
<div class="t f" style="left:102.0px;top:899.0px;font-size:12px;color:#444;--w:33.0">日本語</div>
<div class="t f" style="left:167.8px;top:899.0px;font-size:12px;color:#444;--w:138.2">アクセシビリティ: 問題ありません</div>
<div class="t f" style="left:719.8px;top:899.0px;font-size:12px;color:#444;--w:201.2">不足しているフォントをダウンロードしています...</div>
<div class="t f" style="left:1040.0px;top:899.0px;font-size:12px;color:#444;--w:27.6">ノート</div>
<div class="t f" style="left:1372.0px;top:899.0px;font-size:12px;color:#444;--w:21.7">96%</div>
<div class="t f" style="left:656.0px;top:221.2px;font-size:6px;color:#5b4a40;--w:41.8">にじせいちょう</div>
<div class="t f" style="left:704.7px;top:221.2px;font-size:6px;color:#5b4a40;--w:19.0">あらわ</div>
<div class="t f" style="left:654.5px;top:228.6px;font-size:12px;color:#5b4a40;font-weight:bold;--w:143.7">二次性徴が現れる前の女の子</div>
<div class="t f" style="left:708.7px;top:272.8px;font-size:13px;color:#231815;--w:64.2">かすいたい</div>
<div class="t f" style="left:597.4px;top:257.8px;font-size:9px;color:#333;--w:19.0">大脳</div>
<div class="t f" style="left:562.7px;top:298.7px;font-size:9px;color:#333;--w:24.3">下垂体</div>
<div class="t f" style="left:504.4px;top:625.5px;font-size:11px;color:#8b2472;--w:21.2">げっ</div>
<div class="t f" style="left:539.5px;top:625.5px;font-size:11px;color:#8b2472;--w:21.8">けい</div>
<div class="t f" style="left:676.0px;top:627.1px;font-size:11px;color:#8b2472;--w:18.8">しょ</div>
<div class="t f" style="left:703.9px;top:627.1px;font-size:11px;color:#8b2472;--w:22.4">けい</div>
<div class="t f" style="left:1118.7px;top:219.5px;font-size:6px;color:#5b4a40;--w:44.3">にじせいちょう</div>
<div class="t f" style="left:1169.0px;top:219.5px;font-size:6px;color:#5b4a40;--w:19.0">あらわ</div>
<div class="t f" style="left:1117.0px;top:226.9px;font-size:12px;color:#5b4a40;font-weight:bold;--w:133.3">二次性徴が現れた後の女子</div>
<div class="t f" style="left:1151.6px;top:323.6px;font-size:16px;color:#444;--w:43.4">にきび</div>
<div class="t f" style="left:883.3px;top:436.0px;font-size:16px;color:#444;--w:43.3">わきげ</div>
<div class="t f" style="left:1184.0px;top:433.5px;font-size:6px;color:#444;--w:6.0">ち</div>
<div class="t f" style="left:1197.0px;top:433.5px;font-size:6px;color:#444;--w:15.0">ぶさ</div>
<div class="t f" style="left:1181.0px;top:441.0px;font-size:16px;color:#444;--w:43.3">乳房が</div>
<div class="t f" style="left:1182.0px;top:458.4px;font-size:6px;color:#444;--w:30.0">はったつ</div>
<div class="t f" style="left:1181.0px;top:465.5px;font-size:16px;color:#444;--w:59.0">発達する</div>
<div class="t f" style="left:905.5px;top:622.6px;font-size:16px;color:#444;--w:57.7">せいもう</div>
<div class="t f" style="left:908.0px;top:640.3px;font-size:10px;color:#444;--w:51.7">（いんもう）</div>
<div class="t f" style="left:1141.6px;top:679.8px;font-size:6px;color:#444;--w:29.4">げっけい</div>
<div class="t f" style="left:1139.8px;top:687.0px;font-size:16px;color:#444;--w:103.0">月経がはじまる</div>
<div class="t f" style="left:867.6px;top:709.9px;font-size:18px;color:#e8432c;--w:99.4">ふっくらした</div>
<div class="t f" style="left:867.6px;top:732.0px;font-size:18px;color:#e8432c;--w:99.4">からだつきに</div>
<div class="t f" style="left:867.6px;top:753.0px;font-size:18px;color:#e8432c;--w:34.4">なる</div>
<script>
(function(){var els=document.querySelectorAll('.f');for(var i=0;i<els.length;i++){var e=els[i];var w=parseFloat(getComputedStyle(e).getPropertyValue('--w'));var r=e.getBoundingClientRect().width;if(w>0&&r>0){e.style.transform='scaleX('+(w/r)+')';}}})();
</script>
</body></html>
